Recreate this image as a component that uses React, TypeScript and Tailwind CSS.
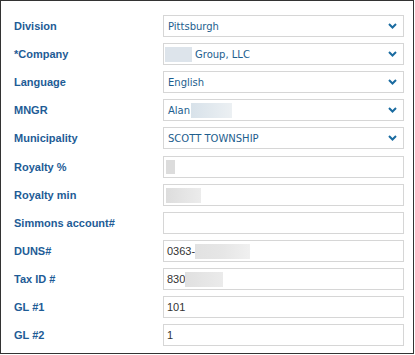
import React from "react";

const labelCls =
  "w-[149px] shrink-0 text-[11px] font-bold text-[#1e5c96] leading-none";
const boxCls =
  "w-[241px] h-[22px] border border-[#d6d6d6] bg-white flex items-center";

function Chevron() {
  return (
    <svg width="9" height="6" viewBox="0 0 9 6" className="shrink-0">
      <path d="M1 1 L4.5 4.5 L8 1" fill="none" stroke="#1a6ba0" strokeWidth="2" />
    </svg>
  );
}

function SelectBox({ children }: { children: React.ReactNode }) {
  return (
    <div className={`${boxCls} justify-between pl-[4px] pr-[6px]`}>
      <div
        className="flex items-center text-[10px] text-[#1d5e8e]"
        style={{ fontFamily: '"DejaVu Sans", sans-serif' }}
      >
        {children}
      </div>
      <Chevron />
    </div>
  );
}

function InputBox({ children }: { children?: React.ReactNode }) {
  return (
    <div className={`${boxCls} pl-[1px]`}>
      <div className="flex items-center text-[11px] text-[#333333]">{children}</div>
    </div>
  );
}

function Row({
  label,
  children,
  extra = "",
}: {
  label: string;
  children: React.ReactNode;
  extra?: string;
}) {
  return (
    <div className={`flex items-center h-[22px] ${extra}`}>
      <div className={labelCls}>{label}</div>
      {children}
    </div>
  );
}

export default function App() {
  return (
    <div
      className="w-[414px] h-[354px] border border-[#333333] bg-white pl-[13px] pt-[14px] flex flex-col gap-[6px]"
      style={{ fontFamily: '"Liberation Sans", Arial, sans-serif' }}
    >
      <Row label="Division">
        <SelectBox>Pittsburgh</SelectBox>
      </Row>
      <Row label="*Company">
        <SelectBox>
          <span className="inline-block w-[27px] h-[15px] bg-[#dde4eb] -ml-[3px] mr-[3px]" />
          Group, LLC
        </SelectBox>
      </Row>
      <Row label="Language">
        <SelectBox>English</SelectBox>
      </Row>
      <Row label="MNGR">
        <SelectBox>
          Alan
          <span className="inline-block w-[41px] h-[15px] bg-gradient-to-r from-[#d8e2ea] to-[#ecf0f3] ml-[1px]" />
        </SelectBox>
      </Row>
      <Row label="Municipality">
        <SelectBox>SCOTT TOWNSHIP</SelectBox>
      </Row>
      <Row label="Royalty %" extra="mt-[1px]">
        <InputBox>
          <span className="inline-block w-[9px] h-[14px] bg-[#dcdcdc] ml-[1px]" />
        </InputBox>
      </Row>
      <Row label="Royalty min">
        <InputBox>
          <span className="inline-block w-[35px] h-[15px] bg-gradient-to-r from-[#dddddd] to-[#ececec] ml-[1px]" />
        </InputBox>
      </Row>
      <Row label="Simmons account#">
        <InputBox />
      </Row>
      <Row label="DUNS#">
        <InputBox>
          <span className="ml-[2px]">0363-</span>
          <span className="inline-block w-[55px] h-[15px] bg-gradient-to-r from-[#e2e2e2] via-[#e6e6e6] to-[#f0f0f0]" />
        </InputBox>
      </Row>
      <Row label="Tax ID #">
        <InputBox>
          <span className="ml-[2px]">830</span>
          <span className="inline-block w-[38px] h-[15px] bg-gradient-to-r from-[#e0e0e0] to-[#ebebeb]" />
        </InputBox>
      </Row>
      <Row label="GL #1">
        <InputBox>
          <span className="ml-[2px]">101</span>
        </InputBox>
      </Row>
      <Row label="GL #2">
        <InputBox>
          <span className="ml-[2px]">1</span>
        </InputBox>
      </Row>
    </div>
  );
}
